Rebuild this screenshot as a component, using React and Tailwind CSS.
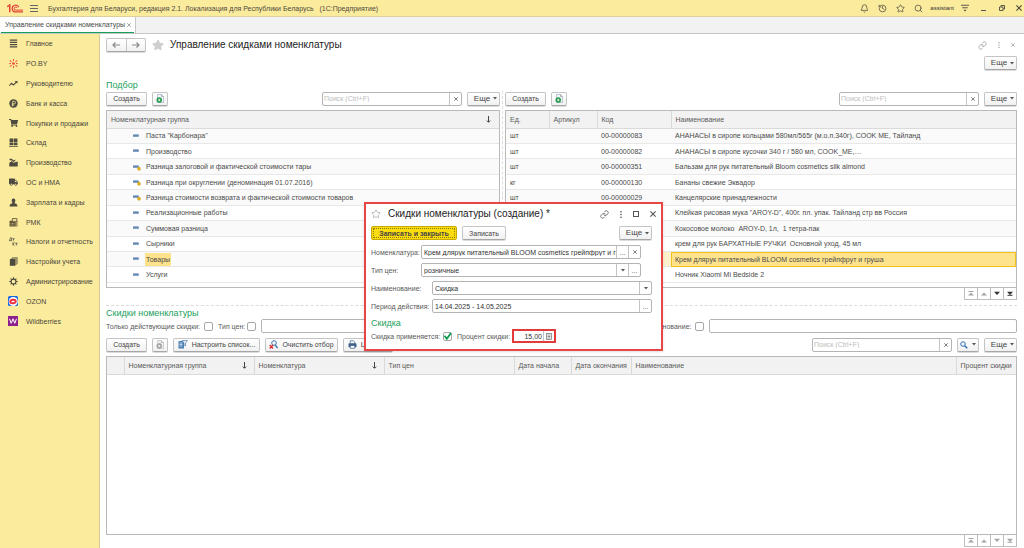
import React from "react";
import { Bell, History, Star, Search, Link } from "lucide-react";
import { FaShoppingCart, FaTruck, FaStar } from "react-icons/fa";

const BTN =
  "flex shrink-0 items-center justify-center rounded-[2px] border border-[#c4c4c4] border-b-[#a6a6a6] bg-linear-to-b from-white to-[#f1f1f1] text-[#444] shadow-[0_1px_0_#dcdcdc]";
const FIELD = "flex items-stretch rounded-[2px] border border-[#b4b4b4] bg-white";
const FIELD_BTN = "flex w-[12px] shrink-0 items-center justify-center border-l border-[#c4c4c4] text-[#555]";

/* ---------- small glyphs ---------- */

function Caret() {
  return (
    <svg className="h-[3px] w-[4px]" viewBox="0 0 4 3" aria-hidden="true">
      <path d="M0 0h4L2 2.6z" fill="#555" />
    </svg>
  );
}

function Cross({ className = "h-[4px] w-[4px]" }) {
  return (
    <svg className={className} viewBox="0 0 8 8" fill="none" stroke="currentColor" strokeWidth="1.5" aria-hidden="true">
      <path d="M.5.5l7 7M7.500.5l-7 7" />
    </svg>
  );
}

function Dots({ className = "h-[7px] w-[2px]" }) {
  return (
    <svg className={className} viewBox="0 0 2 8" fill="currentColor" aria-hidden="true">
      <rect x=".2" y="0" width="1.500" height="1.600" />
      <rect x=".2" y="3.200" width="1.500" height="1.600" />
      <rect x=".2" y="6.400" width="1.500" height="1.600" />
    </svg>
  );
}

function SortArrow() {
  return (
    <svg className="h-[7px] w-[5px]" viewBox="0 0 5 7" fill="none" stroke="#444" aria-hidden="true">
      <path d="M2.500 0v6" />
      <path d="M.8 4.600l1.700 1.700 1.700-1.700" />
    </svg>
  );
}

function ArrowIcon({ back }) {
  return (
    <svg className="h-[6px] w-[8px]" viewBox="0 0 8 6" fill="none" stroke="#8a8a8a" strokeWidth="1.200" aria-hidden="true">
      {back ? <path d="M8 3H1M3.500.5L1 3l2.500 2.500" /> : <path d="M0 3h7M4.500.5L7 3 4.500 5.500" />}
    </svg>
  );
}

function CopyIcon({ muted }) {
  return (
    <svg className="h-[9px] w-[8px]" viewBox="0 0 16 18" aria-hidden="true">
      <path d="M3 1h8l4 4v12H3z" fill={muted ? "#ececec" : "#f4f7fa"} stroke={muted ? "#c4c4c4" : "#9fafbe"} strokeWidth="1.400" />
      <path d="M11 1v4h4" fill="none" stroke={muted ? "#b5b5b5" : "#8a9bab"} strokeWidth="1.400" />
      <circle cx="6.500" cy="12" r="5.500" fill={muted ? "#a3a3a3" : "#239a4a"} />
      <path d="M6.500 9.500v5M4 12h5" stroke="#fff" strokeWidth="1.600" />
    </svg>
  );
}

function ListSetupIcon() {
  return (
    <svg className="h-[9px] w-[10px]" viewBox="0 0 20 18" aria-hidden="true">
      <path d="M1 2h11v15H1z" fill="#4b7fb5" />
      <path d="M3 6h6M3 9h6M3 12h6" stroke="#fff" strokeWidth="1.300" />
      <path d="M8 1h11l-4 5v6l-3-2V6z" fill="#eef4fa" stroke="#3d6c9e" strokeWidth="1.200" />
    </svg>
  );
}

function ClearFilterIcon() {
  return (
    <svg className="h-[9px] w-[9px]" viewBox="0 0 18 18" fill="none" aria-hidden="true">
      <circle cx="10" cy="6" r="4.600" stroke="#3d75ad" strokeWidth="2" />
      <path d="M12.500 10l4.500 6" stroke="#3d75ad" strokeWidth="2.600" />
      <path d="M1.500 10l6.500 7M8 10l-6.500 7" stroke="#dc2f2f" strokeWidth="2.800" />
    </svg>
  );
}

function PrinterIcon() {
  return (
    <svg className="h-[9px] w-[9px]" viewBox="0 0 18 18" aria-hidden="true">
      <path d="M4.500 7V1.500h6L13.500 4v3" fill="#fff" stroke="#3c6288" strokeWidth="1.500" />
      <rect x="1" y="6.500" width="16" height="8" rx="1.500" fill="#3c6288" />
      <path d="M4.500 11h9v5.500h-9z" fill="#fff" stroke="#3c6288" strokeWidth="1.500" />
    </svg>
  );
}

function FindIcon() {
  return (
    <svg className="h-[8px] w-[8px]" viewBox="0 0 16 16" fill="none" stroke="#2f73b5" aria-hidden="true">
      <circle cx="6" cy="6" r="4.500" strokeWidth="2" />
      <path d="M9.500 9.500l5 5" strokeWidth="3" />
    </svg>
  );
}

function CalcIcon() {
  return (
    <svg className="h-[7px] w-[6px]" viewBox="0 0 12 14" aria-hidden="true">
      <rect x="1" y="1" width="10" height="12" fill="#fff" stroke="#777" strokeWidth="1.500" />
      <path d="M3 4h6M3 7h6M3 10h6" stroke="#777" strokeWidth="1.600" />
    </svg>
  );
}

function NavGlyph({ up, bar }) {
  return (
    <svg className="h-[5px] w-[6px]" viewBox="0 0 6 5" fill="currentColor" aria-hidden="true">
      {up ? <path d="M0 4.500h6L3 1.500z" /> : <path d="M0 .8h6L3 4z" />}
      {bar && up && <path d="M.5 0h5v1h-5z" />}
      {bar && !up && <path d="M.5 3.800h5v1h-5z" />}
    </svg>
  );
}

function Logo() {
  return (
    <svg className="h-[9px] w-[16px] shrink-0" viewBox="0 0 32 18" fill="none" stroke="#e2443a" aria-label="1С">
      <path d="M.5 5.500L5.500 2v14.500" strokeWidth="3" />
      <path d="M23.500 6.500A6.800 6.800 0 1 0 17.500 15.800H32" strokeWidth="2.400" />
      <path d="M20 8a3 3 0 1 0-2.500 4.200H32" strokeWidth="2" />
    </svg>
  );
}

/* ---------- sidebar icons, 16x16 grid ---------- */

const SIDE = "h-[9px] w-[9px]";
const side = {
  main: (
    <svg className={SIDE} viewBox="0 0 16 16" stroke="#4d4a40" strokeWidth="2" aria-hidden="true">
      <path d="M1.500 2h13M1.500 6h13M1.500 10h13M1.500 14h13" />
    </svg>
  ),
  po: (
    <svg className={SIDE} viewBox="0 0 16 16" stroke="#e8503c" strokeWidth="1.800" fill="none" aria-hidden="true">
      <path d="M8 0v3.500M8 12.500V16M.5 8h3M12.500 8h3M1.500 2.500l3 2.500M14.500 2.500l-3 2.500M1.500 13.500l3-2.500M14.500 13.500l-3-2.500" />
      <circle cx="8" cy="8" r="1.500" fill="#e8503c" />
    </svg>
  ),
  chart: (
    <svg className={SIDE} viewBox="0 0 16 16" stroke="#4d4a40" strokeWidth="2" fill="none" aria-hidden="true">
      <path d="M.5 12l4-4.500 3.500 3 6-6" />
      <path d="M10 3.500h5v5z" fill="#4d4a40" stroke="none" />
    </svg>
  ),
  bank: (
    <svg className={SIDE} viewBox="0 0 16 16" fill="none" aria-hidden="true">
      <circle cx="8" cy="8" r="7.500" fill="#4d4a40" />
      <path d="M6.500 13V4h2.700a2.300 2.300 0 0 1 0 4.700H4.800M4.800 10.800h4.500" stroke="#fbeb9d" strokeWidth="1.400" />
    </svg>
  ),
  cart: <FaShoppingCart className="h-[8px] w-[9px] text-[#4d4a40]" />,
  store: (
    <svg className={SIDE} viewBox="0 0 16 16" fill="#4d4a40" aria-hidden="true">
      <path d="M1 1h6.500v6H1zM8.500 1H15v6H8.500zM1 8h6.500v5H1zM8.500 8H15v5H8.500zM0 14h16v1.500H0z" />
    </svg>
  ),
  factory: (
    <svg className={SIDE} viewBox="0 0 16 16" fill="#4d4a40" aria-hidden="true">
      <path d="M.5 15V9l4-3.500L8 8.500 15.500 6v9zM1 1.500h4l3 3 3-2v3L8 7 4.500 4H1z" />
    </svg>
  ),
  truck: <FaTruck className="h-[8px] w-[9px] text-[#4d4a40]" />,
  user: (
    <svg className={SIDE} viewBox="0 0 16 16" fill="#4d4a40" aria-hidden="true">
      <path d="M8 1a3.300 3.300 0 0 1 3.300 3.500C11.300 6.500 10 8.500 9.800 9.500c2.500.6 5.200 1.500 5.200 5.500H1c0-4 2.700-4.900 5.200-5.500C6 8.500 4.700 6.500 4.700 4.500A3.300 3.300 0 0 1 8 1z" />
    </svg>
  ),
  rmk: (
    <svg className={SIDE} viewBox="0 0 16 16" aria-hidden="true">
      <path d="M6 1h8v5H6z" fill="none" stroke="#5b5038" strokeWidth="1.500" />
      <path d="M1 5h5l1 2h5v8H1z" fill="#5b5038" />
      <path d="M13 5h2v10h-2z" fill="#7a6a45" />
      <path d="M3 9.500h7M3 12.500h7" stroke="#fbeb9d" strokeWidth="1.200" strokeDasharray="1.500 1" />
    </svg>
  ),
  tax: (
    <svg className={SIDE} viewBox="0 0 16 16" fill="none" stroke="#4d4a40" strokeWidth="1.300" aria-hidden="true">
      <path d="M0 6.500h5.500M1 6l1.500-4.500H4.500V6M6 3h4M8 3v3.500M7 9.500V15M10 9.500l-3 2.700L10 15M11 11h4.500M13.200 11v4" />
    </svg>
  ),
  books: (
    <svg className={SIDE} viewBox="0 0 16 16" fill="#4d4a40" aria-hidden="true">
      <path d="M5 0h10v12.500h-1V1H5zM3.300 1.800H13.200V14h-1V2.800H3.300zM1.500 3.500h10v12h-10z" />
    </svg>
  ),
  gear: (
    <svg className={SIDE} viewBox="0 0 16 16" fill="none" stroke="#4d4a40" aria-hidden="true">
      <circle cx="8" cy="8" r="4.300" strokeWidth="2" />
      <path d="M8 .5v3M8 12.500v3M.5 8h3M12.500 8h3M2.800 2.800l2 2M13.200 2.800l-2 2M2.800 13.200l2-2M13.200 13.200l-2-2" strokeWidth="2" />
    </svg>
  ),
  ozon: (
    <svg className="h-[10px] w-[10px]" viewBox="0 0 20 20" aria-hidden="true">
      <rect width="20" height="20" rx="3" fill="#1668e8" />
      <circle cx="10.500" cy="11" r="9" fill="#fff" />
      <ellipse cx="10" cy="11" rx="5.500" ry="3.500" fill="none" stroke="#ee3040" strokeWidth="4" transform="rotate(-12 10 11)" />
    </svg>
  ),
  wb: (
    <svg className="h-[10px] w-[10px]" viewBox="0 0 20 20" aria-hidden="true">
      <rect width="20" height="20" rx="1" fill="#8e1f8f" />
      <path d="M3 5.500l3.500 9 3.500-9 3.500 9 3.500-9" fill="none" stroke="#fff" strokeWidth="2" />
    </svg>
  ),
};

const menu = [
  ["main", "Главное"],
  ["po", "PO.BY"],
  ["chart", "Руководителю"],
  ["bank", "Банк и касса"],
  ["cart", "Покупки и продажи"],
  ["store", "Склад"],
  ["factory", "Производство"],
  ["truck", "ОС и НМА"],
  ["user", "Зарплата и кадры"],
  ["rmk", "РМК"],
  ["tax", "Налоги и отчетность"],
  ["books", "Настройки учета"],
  ["gear", "Администрирование"],
  ["ozon", "OZON"],
  ["wb", "Wildberries"],
];

const groups = [
  { name: 'Паста "Карбонара"' },
  { name: "Производство" },
  { name: "Разница залоговой и фактической стоимости тары", system: true },
  { name: "Разница при округлении (деноминация 01.07.2016)", system: true },
  { name: "Разница стоимости возврата и фактической стоимости товаров", system: true },
  { name: "Реализационные работы" },
  { name: "Суммовая разница" },
  { name: "Сырники" },
  { name: "Товары", selected: true },
  { name: "Услуги" },
];

const goods = [
  { unit: "шт", code: "00-00000083", name: "АНАНАСЫ в сиропе кольцами 580мл/565г (м.о.п.340г), COOK ME, Тайланд" },
  { unit: "шт", code: "00-00000082", name: "АНАНАСЫ в сиропе кусочки 340 г / 580 мл, COOK_ME,…" },
  { unit: "шт", code: "00-00000351", name: "Бальзам для рук питательный Bloom cosmetics silk almond" },
  { unit: "кг", code: "00-00000130", name: "Бананы свежие Эквадор" },
  { unit: "шт", code: "00-00000029", name: "Канцелярские принадлежности" },
  { name: 'Клейкая рисовая мука "AROY-D", 400г. пл. упак. Тайланд стр вв Россия' },
  { name: "Кокосовое молоко  AROY-D, 1л,  1 тетра-пак" },
  { name: "крем для рук БАРХАТНЫЕ РУЧКИ  Основной уход, 45 мл" },
  { name: "Крем длярук питательный BLOOM cosmetics грейпфрут и груша", active: true },
  { name: "Ночник Xiaomi Mi Bedside 2" },
];

/* ---------- shared controls ---------- */

function MoreButton() {
  return (
    <button type="button" className={`${BTN} h-[14px] w-[33px] gap-[3px] pl-1 text-[8px]`}>
      Еще
      <Caret />
    </button>
  );
}

function SearchBox({ label }) {
  return (
    <div className={`${FIELD} h-[14px] w-[140px]`}>
      <input
        type="text"
        aria-label={label}
        placeholder="Поиск (Ctrl+F)"
        className="min-w-0 flex-1 bg-transparent pl-px outline-none placeholder:text-[#bdbdbd]"
      />
      <button type="button" aria-label="Очистить поиск" className={FIELD_BTN}>
        <Cross />
      </button>
    </div>
  );
}

function ListToolbar({ label }) {
  return (
    <div className="flex h-[15px] items-center">
      <button type="button" className={`${BTN} h-[14px] w-[41px]`}>
        Создать
      </button>
      <button type="button" aria-label="Создать копированием" className={`${BTN} ml-[5px] h-[14px] w-[16px]`}>
        <CopyIcon />
      </button>
      <div className="ml-auto flex items-center gap-[5px]">
        <SearchBox label={label} />
        <MoreButton />
      </div>
    </div>
  );
}

function Pager({ active }) {
  const items = [
    ["В начало", true, true, false],
    ["Вверх", true, false, false],
    ["Вниз", false, false, active],
    ["В конец", false, true, active],
  ];
  return (
    <div className="flex h-[12px] self-end border-r border-b border-[#bdbdbd]">
      {items.map(([label, up, bar, on]) => (
        <button
          key={label}
          type="button"
          aria-label={label}
          className={`flex w-[13px] items-center justify-center border-l border-[#bdbdbd] ${on ? "text-[#333]" : "text-[#a5a5a5]"}`}
        >
          <NavGlyph up={up} bar={bar} />
        </button>
      ))}
    </div>
  );
}

const TH = "h-[17px] border-b border-[#dadada] px-1 text-left font-normal text-[#5a5a5a]";

function GroupIcon({ system }) {
  return (
    <svg className="h-[8px] w-[8px] shrink-0" viewBox="0 0 16 16" aria-hidden="true">
      <rect x="0" y="4.500" width="11.500" height="4.500" rx="1" fill="#7c9cc6" />
      <rect x="0" y="7" width="11.500" height="2" fill="#55779f" />
      {system && <circle cx="12" cy="11.500" r="3.300" fill="#e3b51f" stroke="#b58a10" strokeWidth=".6" />}
    </svg>
  );
}

function GroupTable() {
  return (
    <div className="h-[178px] overflow-hidden border border-[#b9b9b9] bg-white">
      <table className="h-[172px] w-full table-fixed border-collapse">
        <thead className="bg-[#f2f2f2]">
          <tr>
            <th className={TH}>
              <span className="flex items-center justify-between pr-[4px]">
                Номенклатурная группа
                <SortArrow />
              </span>
            </th>
          </tr>
        </thead>
        <tbody>
          {groups.map((g) => (
            <tr key={g.name} className="border-b border-[#e8e8e8] odd:bg-[#fafafa]">
              <td className="p-0 pl-[26px]">
                <span className="flex items-center gap-1">
                  <GroupIcon system={g.system} />
                  <span className={`px-px py-[3px] whitespace-nowrap ${g.selected ? "bg-[#ffe38c]" : ""}`}>{g.name}</span>
                </span>
              </td>
            </tr>
          ))}
        </tbody>
      </table>
    </div>
  );
}

function GoodsTable() {
  return (
    <div className="h-[178px] overflow-hidden border border-[#b9b9b9] bg-white">
      <table className="h-[172px] w-full table-fixed border-collapse">
        <colgroup>
          <col className="w-[43px]" />
          <col className="w-[48px]" />
          <col className="w-[74px]" />
          <col />
        </colgroup>
        <thead className="bg-[#f2f2f2]">
          <tr>
            <th className={`${TH} border-r`}>Ед.</th>
            <th className={`${TH} border-r`}>Артикул</th>
            <th className={`${TH} border-r`}>Код</th>
            <th className={TH}>Наименование</th>
          </tr>
        </thead>
        <tbody>
          {goods.map(({ unit, code, name, active }) => (
            <tr key={name} className={`border-b border-[#e8e8e8] ${active ? "bg-[#fdf0cd]" : "odd:bg-[#fafafa]"}`}>
              <td className="px-1 py-0">{unit}</td>
              <td className="px-1 py-0" />
              <td className="px-1 py-0">{code}</td>
              <td
                className={`px-1 py-0 whitespace-pre ${active ? "bg-[#ffe38c] outline outline-offset-[-1px] outline-[#f2c21c]" : ""}`}
              >
                {name}
              </td>
            </tr>
          ))}
        </tbody>
      </table>
    </div>
  );
}

function Check({ id }) {
  return (
    <input
      id={id}
      type="checkbox"
      className="h-[9px] w-[9px] shrink-0 appearance-none rounded-[2px] border border-[#a8a8a8] bg-white"
    />
  );
}

function DiscountTable() {
  return (
    <div className="flex-1 border border-[#b9b9b9] bg-white">
      <table className="w-full table-fixed border-collapse">
        <colgroup>
          <col className="w-[17px]" />
          <col className="w-[130px]" />
          <col className="w-[130px]" />
          <col className="w-[130px]" />
          <col className="w-[57px]" />
          <col className="w-[60px]" />
          <col />
          <col className="w-[60px]" />
        </colgroup>
        <thead className="bg-[#f2f2f2]">
          <tr className="whitespace-nowrap">
            <th className={`${TH} border-r`} aria-label="Состояние" />
            <th className={`${TH} border-r`}>
              <span className="flex items-center justify-between pr-[3px]">
                Номенклатурная группа
                <SortArrow />
              </span>
            </th>
            <th className={`${TH} border-r`}>
              <span className="flex items-center justify-between pr-[3px]">
                Номенклатура
                <SortArrow />
              </span>
            </th>
            <th className={`${TH} border-r`}>Тип цен</th>
            <th className={`${TH} border-r`}>Дата начала</th>
            <th className={`${TH} border-r`}>Дата окончания</th>
            <th className={`${TH} border-r`}>Наименование</th>
            <th className={TH}>Процент скидки</th>
          </tr>
        </thead>
      </table>
    </div>
  );
}

/* ---------- dialog ---------- */

function DialogField({ id, label, value, labelClass, children }) {
  return (
    <div className="flex h-[14px] items-center">
      <label htmlFor={id} className={`shrink-0 whitespace-nowrap text-[#5a5a5a] ${labelClass}`}>
        {label}
      </label>
      <div className={`${FIELD} h-[14px] w-[220px]`}>
        <input id={id} type="text" defaultValue={value} className="min-w-0 flex-1 bg-transparent pl-[2px] text-[#333] outline-none" />
        {children}
      </div>
    </div>
  );
}

function Ellipsis() {
  return (
    <button type="button" aria-label="Выбрать" className={FIELD_BTN}>
      ...
    </button>
  );
}

function DropButton() {
  return (
    <button type="button" aria-label="Открыть список" className={FIELD_BTN}>
      <Caret />
    </button>
  );
}

function DiscountDialog() {
  return (
    <section
      role="dialog"
      aria-labelledby="dialog-title"
      className="absolute top-[202px] left-[364px] w-[299px] border-2 border-[#e84545] bg-white px-[5px] pt-[4px] pb-[6px] shadow-sm"
    >
      <div className="flex h-[12px] items-center text-[#555]">
        <button type="button" aria-label="В избранное">
          <Star className="h-[10px] w-[10px] text-[#999]" strokeWidth={1.5} />
        </button>
        <h2 id="dialog-title" className="ml-[7px] text-[10px] text-[#222]">
          Скидки номенклатуры (создание) *
        </h2>
        <div className="ml-auto flex items-center gap-[11px]">
          <button type="button" aria-label="Ссылка">
            <Link className="h-[9px] w-[9px]" strokeWidth={2} />
          </button>
          <button type="button" aria-label="Действия">
            <Dots />
          </button>
          <button type="button" aria-label="Развернуть" className="h-[6px] w-[6px] border border-[#555]" />
          <button type="button" aria-label="Закрыть">
            <Cross className="h-[6px] w-[6px]" />
          </button>
        </div>
      </div>
      <div className="mt-[6px] mr-[4px] flex h-[14px] items-center">
        <button
          type="button"
          className="h-[14px] w-[86px] rounded-[2px] border border-[#c9a800] bg-[#fbdc0e] font-bold text-[#444] outline-1 outline-offset-[-3px] outline-dotted outline-[#8f7a10]"
        >
          Записать и закрыть
        </button>
        <button type="button" className={`${BTN} ml-[5px] h-[14px] w-[44px]`}>
          Записать
        </button>
        <div className="ml-auto">
          <MoreButton />
        </div>
      </div>
      <div className="mt-[5px] flex flex-col gap-[4px]">
        <DialogField id="item" label="Номенклатура:" labelClass="w-[50px]" value="Крем длярук питательный BLOOM cosmetics грейпфрут и груша">
          <Ellipsis />
          <button type="button" aria-label="Очистить" className={FIELD_BTN}>
            <Cross />
          </button>
        </DialogField>
        <DialogField id="price-type" label="Тип цен:" labelClass="w-[50px]" value="розничные">
          <DropButton />
          <Ellipsis />
        </DialogField>
        <DialogField id="name" label="Наименование:" labelClass="w-[61px]" value="Скидка">
          <DropButton />
        </DialogField>
        <DialogField id="period" label="Период действия:" labelClass="w-[61px]" value="14.04.2025 - 14.05.2025">
          <Ellipsis />
        </DialogField>
      </div>
      <h3 className="mt-[5px] text-[9px] leading-[10px] text-[#21a05a]">Скидка</h3>
      <div className="mt-[1px] flex h-[14px] items-center text-[#5a5a5a]">
        <label htmlFor="applied" className="w-[72px] shrink-0 whitespace-nowrap">
          Скидка применяется:
        </label>
        <span className="grid h-[9px] w-[9px] shrink-0">
          <input
            id="applied"
            type="checkbox"
            defaultChecked
            className="col-start-1 row-start-1 h-[9px] w-[9px] appearance-none rounded-[2px] border border-[#a8a8a8] bg-white"
          />
          <svg className="pointer-events-none col-start-1 row-start-1 h-[9px] w-[9px]" viewBox="0 0 9 9" fill="none" stroke="#0f9a4c" strokeWidth="1.800" aria-hidden="true">
            <path d="M1.500 3.800l2.300 3L8 1" />
          </svg>
        </span>
        <label htmlFor="percent" className="ml-[5px] w-[55px] shrink-0 whitespace-nowrap">
          Процент скидки:
        </label>
        <div className="flex h-[14px] w-[44px] items-stretch border-2 border-[#e23b3b] bg-white">
          <input id="percent" type="text" defaultValue="15,00" className="min-w-0 flex-1 bg-transparent pr-px text-right text-[#333] outline-none" />
          <button type="button" aria-label="Калькулятор" className="flex w-[11px] shrink-0 items-center justify-center border-l border-[#c4c4c4]">
            <CalcIcon />
          </button>
        </div>
      </div>
    </section>
  );
}

/* ---------- page ---------- */

function TopBar() {
  return (
    <header className="flex h-[17px] items-center border-b border-[#ddd09a] bg-[#fbeb9d] pr-[2px] pl-[7px] text-[#4d4a40]">
      <Logo />
      <button type="button" aria-label="Меню" className="ml-[7px] flex h-[7px] w-[8px] flex-col justify-between">
        <span className="h-px w-full bg-[#666]" />
        <span className="h-px w-full bg-[#666]" />
        <span className="h-px w-full bg-[#666]" />
      </button>
      <span className="ml-[10px] whitespace-pre">
        Бухгалтерия для Беларуси, редакция 2.1. Локализация для Республики Беларусь   (1С:Предприятие)
      </span>
      <div className="ml-auto flex items-center">
        <button type="button" aria-label="Уведомления">
          <Bell className="h-[9px] w-[9px]" />
        </button>
        <button type="button" aria-label="История" className="ml-[9px]">
          <History className="h-[9px] w-[9px]" />
        </button>
        <button type="button" aria-label="Избранное" className="ml-[9px]">
          <Star className="h-[9px] w-[9px]" />
        </button>
        <button type="button" aria-label="Поиск" className="ml-[9px]">
          <Search className="h-[9px] w-[9px]" />
        </button>
        <span className="ml-[7px] text-[6px] text-[#333]">assistant</span>
        <button type="button" aria-label="Сервис" className="ml-[7px]">
          <svg className="h-[8px] w-[8px]" viewBox="0 0 16 16" fill="none" stroke="currentColor" strokeWidth="1.800" aria-hidden="true">
            <path d="M0 2.500h16M2.500 7.500h11" />
            <path d="M5 11.500h6l-3 3.500z" fill="currentColor" stroke="none" />
          </svg>
        </button>
        <button type="button" aria-label="Свернуть" className="ml-[12px] h-[6px] w-[5px] border-b border-[#555]" />
        <button type="button" aria-label="Восстановить" className="ml-[13px]">
          <svg className="h-[6px] w-[6px]" viewBox="0 0 12 12" fill="none" stroke="currentColor" strokeWidth="1.800" aria-hidden="true">
            <path d="M1 4h7v7H1zM4 4V1h7v7H8" />
          </svg>
        </button>
        <button type="button" aria-label="Закрыть" className="ml-[11px]">
          <Cross className="h-[6px] w-[6px]" />
        </button>
      </div>
    </header>
  );
}

function Sidebar() {
  return (
    <nav className="w-[100px] shrink-0 border-r border-[#d8cc98] bg-[#fbeb9d]">
      <ul className="flex h-[297px] flex-col">
        {menu.map(([icon, label]) => (
          <li key={label} className="flex flex-1 items-center">
            <a href="#" className="flex items-center pl-2 whitespace-nowrap text-[#4a473c]">
              <span className="flex w-[10px] justify-center">{side[icon]}</span>
              <span className="ml-[8px]">{label}</span>
            </a>
          </li>
        ))}
      </ul>
    </nav>
  );
}

export default function App() {
  return (
    <div className="relative flex min-h-screen flex-col bg-white font-['Liberation_Sans',Arial,sans-serif] text-[7px] leading-none text-[#4a4a4a]">
      <TopBar />
      <div className="flex h-[17px] border-b border-[#c6c6c6] bg-[#f2f2f2]">
        <div className="flex w-[136px] border-r border-[#c6c6c6] bg-white px-px">
          <div className="flex flex-1 items-center justify-between border-b border-b-[#12a05a] pr-[3px] pl-1">
            <a href="#" className="whitespace-nowrap">
              Управление скидками номенклатуры
            </a>
            <button type="button" aria-label="Закрыть вкладку" className="text-[#888]">
              <Cross />
            </button>
          </div>
        </div>
      </div>

      <div className="flex flex-1">
        <Sidebar />
        <main className="flex min-w-0 flex-1 flex-col pt-1 pr-[7px] pb-[1px] pl-[6px]">
          <div className="flex h-[14px] items-center">
            <div className={`${BTN} h-[14px] w-[40px]`}>
              <button type="button" aria-label="Назад" className="flex h-full flex-1 items-center justify-center border-r border-[#c4c4c4]">
                <ArrowIcon back />
              </button>
              <button type="button" aria-label="Вперед" className="flex h-full flex-1 items-center justify-center">
                <ArrowIcon />
              </button>
            </div>
            <button type="button" aria-label="В избранное" className="ml-[6px]">
              <FaStar className="h-[12px] w-[12px] text-[#cfcfcf]" />
            </button>
            <h1 className="ml-[6px] text-[10px] text-[#222]">Управление скидками номенклатуры</h1>
            <div className="ml-auto flex items-center gap-[11px] pr-[2px] text-[#999]">
              <button type="button" aria-label="Ссылка">
                <Link className="h-[9px] w-[9px]" />
              </button>
              <button type="button" aria-label="Действия">
                <Dots className="h-[6px] w-[2px]" />
              </button>
              <button type="button" aria-label="Закрыть">
                <Cross />
              </button>
            </div>
          </div>
          <div className="mt-1 flex justify-end">
            <MoreButton />
          </div>

          <div className="mt-[9px] grid grid-cols-[394fr_5px_512fr]">
            <h2 className="col-span-3 h-[12px] text-[9px] leading-[12px] text-[#21a05a]">Подбор</h2>
            <div className="flex min-w-0 flex-col gap-1">
              <ListToolbar label="Поиск по группам" />
              <GroupTable />
            </div>
            <div className="flex justify-center">
              <div className="border-l border-dashed border-[#dcdcdc]" />
            </div>
            <div className="flex min-w-0 flex-col">
              <div className="mb-1">
                <ListToolbar label="Поиск по номенклатуре" />
              </div>
              <GoodsTable />
              <Pager active />
            </div>
          </div>

          <div className="mt-[5px] border-t border-dashed border-[#dcdcdc]" />
          <h2 className="mt-[2px] text-[9px] leading-[10px] text-[#21a05a]">Скидки номенклатуры</h2>

          <div className="mt-[1px] flex h-[14px] items-center text-[#5a5a5a]">
            <label htmlFor="f-active" className="w-[98px] whitespace-nowrap">
              Только действующие скидки:
            </label>
            <Check id="f-active" />
            <label htmlFor="f-type" className="ml-[5px] w-[29px] whitespace-nowrap">
              Тип цен:
            </label>
            <Check id="f-type" />
            <input type="text" aria-label="Тип цен" className="ml-[5px] h-[14px] min-w-0 flex-1 rounded-[2px] border border-[#b4b4b4] bg-white" />
            <label htmlFor="f-name" className="ml-[15px] w-[54px] whitespace-nowrap">
              Наименование:
            </label>
            <Check id="f-name" />
            <input type="text" aria-label="Наименование" className="ml-[5px] h-[14px] w-[308px] rounded-[2px] border border-[#b4b4b4] bg-white" />
          </div>

          <div className="mt-1 flex h-[15px] items-center gap-[5px]">
            <button type="button" className={`${BTN} h-[14px] w-[41px]`}>
              Создать
            </button>
            <button type="button" disabled aria-label="Создать копированием" className={`${BTN} h-[14px] w-[16px]`}>
              <CopyIcon muted />
            </button>
            <button type="button" className={`${BTN} h-[14px] w-[87px] gap-1 whitespace-nowrap`}>
              <ListSetupIcon />
              Настроить список...
            </button>
            <button type="button" className={`${BTN} h-[14px] w-[73px] gap-1 whitespace-nowrap`}>
              <ClearFilterIcon />
              Очистить отбор
            </button>
            <button type="button" className={`${BTN} h-[14px] w-[50px] gap-1 whitespace-nowrap`}>
              <PrinterIcon />
              Ценники
            </button>
            <div className="ml-auto flex items-center gap-[5px]">
              <SearchBox label="Поиск по скидкам" />
              <button type="button" aria-label="Параметры поиска" className={`${BTN} h-[14px] w-[22px] gap-1`}>
                <FindIcon />
                <Caret />
              </button>
              <MoreButton />
            </div>
          </div>

          <div className="mt-1 flex flex-1 flex-col">
            <DiscountTable />
            <Pager />
          </div>
        </main>
      </div>
      <DiscountDialog />
    </div>
  );
}
